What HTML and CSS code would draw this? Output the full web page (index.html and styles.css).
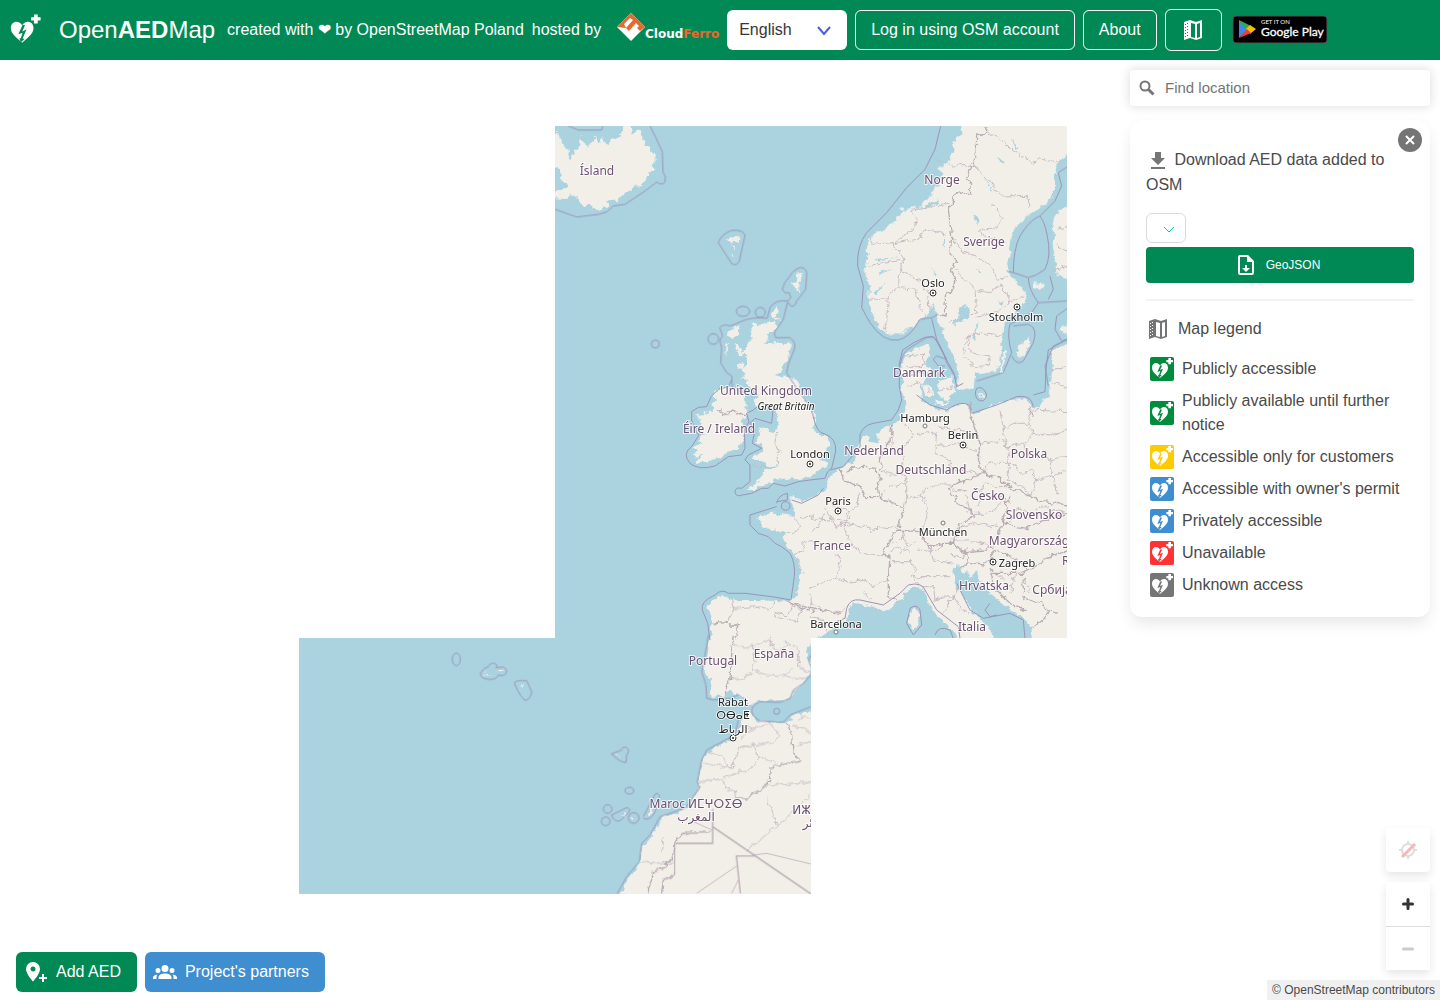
FILE: index.html
```html
<!DOCTYPE html>
<html lang="en">
<head>
<meta charset="utf-8">
<meta name="viewport" content="width=device-width, initial-scale=1">
<title>OpenAEDMap</title>
<link rel="stylesheet" href="styles.css">
</head>
<body>
<svg class="sprite" aria-hidden="true">
  <symbol id="aed" viewBox="0 0 72 72">
    <path fill="#fff" d="M30 26C24 14 6 16 6 32c0 13 13 21 24 31 11-10 24-18 24-31 0-16-18-18-24-6z"/>
    <path fill="currentColor" d="M31 25 22 45l9-3-4 12-3-1 3 9 8-7-4-1 8-19-9 4 6-13z"/>
    <path fill="#fff" d="M55 3h8v6h6v7h-6v6h-8v-6h-6V9h6z"/>
  </symbol>
  <symbol id="map-icon" viewBox="0 0 24 24">
    <path fill="currentColor" fill-rule="evenodd" d="M3 4 9 2l6 2 6-2v18l-6 2-6-2-6 2zM10 5v14l4 1V6zM16 6v14l3-1V5zM4 6v1h1V6zm2-1v1h1V5zM4 9v1h1V9zm2-1v1h1V8zM4 12v1h1v-1zm2-1v1h1v-1zm-2 4v1h1v-1zm2-1v1h1v-1zm-2 4v1h1v-1zm2-1v1h1v-1z"/>
  </symbol>
</svg>

<header class="navbar">
  <svg class="brand-icon"><use href="#aed"/></svg>
  <a class="brand" href="#">Open<b>AED</b>Map</a>
  <span class="credit">created with ❤ by <a href="#">OpenStreetMap Poland</a></span>
  <span class="hosted">hosted by</span>
  <a class="cloudferro" href="#" aria-label="CloudFerro">
    <svg width="104" height="32" viewBox="0 0 104 32">
      <path fill="#fff" d="M2 13 16 27 30 13 16-1z"/>
      <path fill="#e8692c" d="M2 13 16-1l14 14-5 4-3-3 2-2-3-3-7 8-3-3 7-8-3-2-6 6 2 4z"/>
      <text x="30" y="24" class="cf-text" fill="#fff">Cloud<tspan fill="#e8692c">Ferro</tspan></text>
    </svg>
  </a>
  <span class="language">
    <select aria-label="Language"><option>English</option></select>
    <svg width="16" height="10" viewBox="0 0 16 10"><path d="m2 1 6 7 6-7" fill="none" stroke="#485fe0" stroke-width="2"/></svg>
  </span>
  <button class="nav-btn">Log in using OSM account</button>
  <button class="nav-btn">About</button>
  <button class="nav-btn nav-icon" aria-label="Map"><svg width="24" height="24"><use href="#map-icon"/></svg></button>
  <a class="play" href="#" aria-label="Get it on Google Play">
    <svg width="96" height="30" viewBox="0 0 96 30">
      <rect x="1" y="1" width="94" height="27" rx="3" fill="#000" stroke="#555" stroke-width="1"/>
      <path fill="#4285f4" d="M7 6v17l9-9z"/><path fill="#34a853" d="m7 5 12 6-4 4-8-8z"/>
      <path fill="#fbbc04" d="m18 10 6 4-6 5-4-5z"/><path fill="#ea4335" d="m7 23 8-9 4 4z"/>
      <text x="29" y="9" class="play-small">GET IT ON</text>
      <text x="29" y="21" class="play-big">Google Play</text>
    </svg>
  </a>
</header>

<main class="map">
<svg class="tiles" viewBox="299 126 768 768" role="img" aria-label="Map of western Europe">
  <defs>
    <clipPath id="loaded"><path d="M555 126h512v512H811v256H299V638h256z"/></clipPath>
    <filter id="rough" x="289" y="116" width="788" height="788" filterUnits="userSpaceOnUse" color-interpolation-filters="sRGB">
      <feTurbulence type="fractalNoise" baseFrequency=".16" numOctaves="3" seed="4" result="n"/>
      <feDisplacementMap in="SourceGraphic" in2="n" scale="7" xChannelSelector="R" yChannelSelector="G"/>
    </filter>
  </defs>
  <g clip-path="url(#loaded)">
    <path class="sea" d="M299 126h768v768H299z"/>
    <!-- land -->
    <g class="land" filter="url(#rough)">
      <g transform="translate(555 126) scale(.3333)">
        <path d="M-30 12 12 20 22 55 40 68 42 92 50 100 58 72 72 68 78 32 88 45 96 70 110 50 118 32 130 48 140 50 146 30 155 60 168 42 190 38 205 12 218-29H225L232 25 245 12 262 18V40L275 45 270 60 290 72 302 85V105L290 120 298 130 280 145 262 180 235 182 205 205 185 225 160 222 158 238 140 250 112 245 85 235 70 222 50 205 40 218-30 216V205L25 190 40 180 22 165 20 148 5 125-30 115z"/>
        <path d="M515 338 550 330 548 345 530 352zM532 358l8 4-3 12zM533 382l6 14-5-2zM722 445l18-8-6 30-2 35-12-22-10-5 14-12zM650 560l20-14 4 16-14 10 16 10-16 2z"/>
        <path d="M530 605 557 598 550 625 530 640 520 625zM540 650 560 665 563 692 548 680zM514 655 522 650 515 695zM550 715l16-5-4 18-14 4z"/>
      </g>
      <g transform="translate(555 380) scale(.3333)">
        <path d="M500 20 540 28 552 40 570 50 572 75 582 95 568 112 560 125 570 150 560 190 548 210 520 215 490 235 460 245 430 250 425 240 445 228 415 225 430 212 412 205 440 190 430 180 450 160 430 155 440 130 425 105 450 95 475 95 470 75 490 65 480 45z"/>
        <path d="M593-167 660-172 668-162 640-132 630-112 650-110 705-112 708-97 690-52 678-27 660-14 690-7 725 0 735 30 752 60 772 95 780 115 778 150 790 165 820 170 826 200 808 225 795 240 820 245 810 262 780 285 760 295 715 298 690 300 660 295 650 310 620 315 605 330 575 330 590 315 610 300 635 270 660 262 675 255 640 260 620 240 590 240 600 225 625 210 618 190 598 190 615 160 610 145 640 150 660 155 668 135 660 120 665 100 670 90 655 75 620 78 605 85 595 60 615 45 590 30 575 0 555-5 575-20 550-10 575-20 560-30 575-50 570-75 560-82 575-98 585-122z"/>
      </g>
      <g transform="translate(810 380) scale(.3333)">
        <path d="M-160 410-135 400-105 398-75 405-50 408-47 390-60 353-50 345-35 358-10 362 30 335 50 330 55 290 90 265 120 250 135 240 140 210 160 165 175 165 180 185 205 190V155L245 135 275 120 270 105 290 90 285 60 275 30 280 0 272-40 290-82 330-95 355-108 358-75 345-45 365-35 340-20 345 0 330 20 335 50 340 65 370 80 385 95 420 90 440 75 470 70 480 100 490 105 540 80 600 60 650 55 665 80 690 85V60L715 55 720 10 725-40 730-90 805-125V810H665V740L640 715 600 690 560 655 520 625 505 590 500 570 480 590 470 570 465 590 455 565 440 555 430 570 435 620 465 650 480 680 515 725 545 755 565 805 470 800 430 760 410 735 375 700 355 660 340 625 310 620 285 640 265 665 235 690 180 680 130 665 115 685 118 705 80 740 20 775-10 800-5 835 3 860-10 895-40 930-70 960-160 963-185 975-195 960-220 940-240 930-255 947-300 947-298 895-320 875-308 825-298 765-295 720-310 680-285 655-250 648-235 660-165 660-65 665-45 650-30 600V560L-45 525-65 500-80 475-75 460-110 450-145 440z"/>
        <path d="M310 685 325 690V735L310 755 295 720zM335 12 365 20 370 45 345 45zM385 5 430-15 436 40 410 65 385 40zM505 35 525 45 515 55zM380 60l30 8-6 10-24-4z"/>
      </g>
      <g transform="translate(810 126) scale(.3333)">
        <path d="M445-29 455 20 430 50V80L415 110 380 130 400 145 375 190 345 225 325 245 300 240 275 265 250 290 215 315 180 335 170 370 175 400 165 440 178 480 175 510 185 560 200 595 230 625 270 625 310 600 340 575 365 545 370 530 385 590 400 620 410 650 430 690 445 735 440 790 490 792 495 745 550 735 570 720 575 650 580 600 595 570 640 540 650 510 625 470 600 450 595 420 605 330 620 300 660 265 710 230 735 190V140L745 100 805 60V-29z"/>
        <path d="M805 235 750 250 730 280 735 330 725 360 735 400 740 450 805 465zM805 590 750 600 760 625 805 620zM655 635 630 655 620 690 645 690 660 650zM585 670 570 735 578 735 590 680zM670 470l20 0 14 12-14 10-16-6zM270 245l10-4 4 12-8 4z"/>
      </g>
      <g transform="translate(420 635) scale(.3333)">
        <path d="M1200 222 1130 240 1100 262 1010 255 985 225 965 260 950 300 910 325 865 350 845 385 835 440 840 460 800 520 725 550 700 600 665 640 662 680 625 730 590 800H1200z"/>
        <path d="M192 115l20 5-4 3zM238 108h12v5zM300 148l14 4-8 3zM585 357l16 3-10 4zM600 540l18-10-6 18zM635 545l10 5-6 10zM700 510l4 14-12 18-10 4z"/>
      </g>
    </g>
    <!-- lakes -->
    <g class="lake" filter="url(#rough)"><g transform="translate(810 126) scale(.3333)">
      <path d="M450 540 482 543 475 578 428 600 442 570zM506 588 495 642 485 640 500 595zM485 258l18 14-4 26-6-20zM560 95l22 14-4 8zM605 35l20 30-6 4zM500 428l16 10-10 2zM556 530l26-8-10 14zM345 240l40-20-6 14-30 12zM360 420l20 24-4 4zM520 150l30 44-6-2zM400 350l6-20-2 34zM190 500l40-30-30 36zM195 400l70-8-60 12zM205 440l40-14-36 20z"/>
    </g></g>
    <!-- regional borders -->
    <g class="admin" filter="url(#rough)">
      <g transform="translate(810 126) scale(.3333)">
        <path d="M532 15 570 40 600 65 670 112 690 95 750 110M375 95 420 120 490 118 530 155 575 210 655 208 660 240M545 230 580 280 550 310 508 312 520 330 590 345M415 235 300 250 320 285 315 310 250 350 190 355 175 330M250 350 270 380 285 400 270 430 265 480 235 510 230 590 225 620M345 308 410 325M345 308 325 340 255 350M285 400 178 420M270 430 330 465 355 500 360 550M265 485 320 490 330 545 345 570M178 520 235 515M425 335 460 380 500 390 550 430 560 460 595 455M435 430 495 490 500 560 420 590M495 490 530 500 570 480 590 500 600 530 560 560 500 570M540 560 560 590M455 685 475 625 530 625 575 630M475 625 480 680 540 690 535 720 500 725 460 690M575 480 600 530 640 510M775 300 740 310M735 355 775 380M735 430 775 420M285 690 340 685 345 720 290 725M300 750 340 735 360 760M720 730 775 725"/>
      </g>
      <g transform="translate(810 380) scale(.3333)">
        <path d="M245 135 250 190 210 230 215 270 240 285 280 280 290 310 235 320 210 355M275 120 310 165 380 155 375 220 420 240 425 270 510 280M310 165 275 210 280 280M380 140 410 145 440 150 480 155M380 200 440 190 500 215M290 310 290 355 330 345 355 380 345 430 330 455M290 355 270 420M330 345 365 315 425 315M145 335 145 375 110 400 105 430 170 440 190 455 205 440 260 445M65 365 70 385 115 390 120 415 90 425 60 410 50 380M0 415 60 420M105 430 115 480 150 520 215 525M40 400 30 430 5 460M60 410 80 440 105 430M80 520 90 560 80 590 120 610 165 600 190 620 235 600M80 590 30 610 0 625M165 640 185 660M245 545 300 545 320 570 300 590 420 590M320 510 380 515 400 490M360 500 370 540 430 550M300 590 330 620M340 620 370 620 375 660 430 645 450 690 480 700M410 680 440 640 450 620M430 645 400 700M510 190 580 180 590 200 580 150 570 90M580 150 610 130 655 130 670 160 640 190 590 200 600 250 540 250 515 280M655 130 660 90 775 95M670 160 720 165 775 150M640 190 650 220 720 240 775 225M600 250 640 280 670 270 680 300 720 290 775 270M600 250 590 300 640 320 660 350M680 300 660 350M720 240 730 290 740 340M505 340 525 310 555 320 600 320M470 345 480 400 540 400 580 360M450 440 500 430 570 440M420 480 480 480 550 500M430 330 470 335M500 380 520 345 580 350M470 500 460 540 420 520M600 430 620 380 660 400 700 380 770 400M620 560 600 640M560 580 600 620M640 590 660 640M290 20 330 5 365 40M390 30 430 20M725 10 775 20M0 665 40 690 90 695 105 680M0 710 40 720 60 775M235 480 260 490 280 470 300 500 320 480M240 510 270 500 300 520M280 455 290 500 270 520"/>
      </g>
      <g transform="translate(555 380) scale(.3333)">
        <path d="M665 155 660 190 675 215 665 245 675 255M585 258 665 262M720 410 735 440 715 460 690 460M735 415 780 410M720 525 745 510 740 490 780 480M730 540 745 580M530 660 535 690 515 730M530 685 600 680 640 690 660 665M660 695 700 705 710 680 740 690 720 730 665 710 660 695M765 640 770 665 760 690"/>
      </g>
      <g transform="translate(420 635) scale(.3333)">
        <path d="M940 30 975 40 1000 30 1005 80 990 120 960 135 930 130M1000 35 1050 10 1055 40 1090 45 1100 20M1060 35 1050 0M1100 20 1135 50 1140 100 1170 110M1005 105 1040 122 1090 120 1110 130 1160 130M1090 120 1120 100M955 270 1000 280 1050 265 1080 300 1060 320 1000 330 960 340M1000 280 960 310M865 350 900 360 935 400 850 385M935 400 960 340 1000 330 1020 370 1070 380M910 430 990 400 1020 370M838 440 905 432 920 460 945 465 950 490M1050 450 1173 440M1040 490 1060 540 1070 575 1035 600 1010 625 980 645M1070 575 1173 480M1120 270 1173 290M1130 330 1173 320M1135 260 1150 240 1173 250M665 680 700 685 762 682M725 650 730 610"/>
      </g>
    </g>
    <g class="admin"><g transform="translate(420 635) scale(.3333)"><path d="M1000 660 1040 655 1173 687M830 775 950 693M935 775 955 735M820 560 876 585"/></g></g>
    <!-- country borders -->
    <g class="country" filter="url(#rough)">
      <g transform="translate(810 126) scale(.3333)"><path d="M525 0 530 15 500 35 498 90 470 155 485 175 480 205 440 200 415 250 425 330 420 380 440 405 425 430 435 460 430 490 410 510 405 570 385 565"/></g>
      <g transform="translate(810 380) scale(.3333)"><path d="M480 70 490 130 510 190 505 235 515 280 430 315 420 330 440 365 480 395 500 405 450 430 440 460 430 490 400 490 360 500 345 480 330 455 260 450 215 525 240 530 235 600 235 640 260 660M90 265 100 300 150 320 165 350 200 350 280 385 265 440M110 275 130 260 200 265 210 300 200 330 215 355M245 135 240 180 215 215 210 260M515 280 560 290 600 320 640 340 660 350 700 365 775 375M580 350 590 370 580 430 620 440 650 445 690 425 770 400M590 375 600 350M580 430 560 470 550 500 520 510 470 515 450 510 430 490M470 515 475 545 450 565M475 550 520 555 540 530 560 510 620 540 660 570 640 580 540 580 550 620 600 670 650 690 630 690M540 580 545 560M660 570 710 535 775 510M640 640 640 590M640 655 690 670 720 690 700 720 670 740M720 690 740 700M660 80 670 110M-65 665 0 685 90 700"/></g>
      <g transform="translate(555 380) scale(.3333)"><path d="M500 83 490 90 515 105 530 90 555 105 578 100M700 665 740 685 780 695M470 730 510 725 520 735 550 735 540 775"/></g>
      <g transform="translate(420 635) scale(.3333)"><path d="M940 0 935 60 930 130 920 160 918 182M1100 262 1115 300 1118 340 1138 380 1075 390 1050 400 1048 445 985 490 950 488M762 720 730 735 725 775M683 775 700 710 735 695 762 655 765 625 790 592 875 590"/></g>
    </g>
    <g class="country"><g transform="translate(420 635) scale(.3333)"><path d="M765 625H878V522M763 625V720M878 575 1173 777M961 775 949 663H1008"/></g></g>
    <!-- maritime limits -->
    <g class="marine">
      <g transform="translate(555 126) scale(.3333)">
        <path d="M40 0 70 12H140L143 0M285 0 305 40 322 78 324 138Q335 150 330 168 320 180 305 168L270 195 210 235 175 240 155 258 130 265 65 273 0 250M490 350Q498 325 530 313 565 310 570 328L553 405Q545 422 530 413zM755 450Q758 428 738 424 715 430 705 450 685 470 682 490 690 505 702 500L708 515 698 525Q660 520 645 545L637 577Q590 570 550 590L525 600Q505 592 494 605L503 630Q490 640 500 665L497 710 515 740 530 750 532 785M755 450 752 490 725 525Q718 548 705 538L698 528 685 580 658 620 662 635H705Q725 650 718 670L700 715 695 740 730 795 765 840 778 880"/>
        <ellipse cx="564" cy="556" rx="20" ry="15"/><circle cx="616" cy="559" r="15"/><circle cx="475" cy="639" r="16"/><circle cx="301" cy="654" r="12"/>
      </g>
      <g transform="translate(555 380) scale(.3333)">
        <path d="M530 0 520 20 490 28 468 50 455 80 430 82 410 95V120L420 150 432 165 410 200Q380 220 405 250 430 272 480 258L520 230 560 225 570 205 568 150 582 125 575 100 595 90 620 70 655 80 650 130 600 115 585 130 600 150 592 190 620 205 580 225 570 240 585 255V305L560 325Q540 320 540 338 545 352 562 345L590 340 620 325 640 325 655 310 690 318 730 305 765 300 810 295 818 275 830 265 842 215Q845 175 810 162 785 160 775 110M665 380 585 405V435L610 460 640 470 660 490 680 500 705 520Q722 550 718 590L708 660 650 650 570 640 520 640Q500 625 480 645 435 665 442 690L458 730 465 780M665 370Q670 345 697 340V360L665 365M710 360 740 370 790 345 805 325"/><circle cx="692" cy="378" r="13"/>
      </g>
      <g transform="translate(810 380) scale(.3333)">
        <path d="M60 270 100 260 150 200 150 165Q160 135 190 130L245 120 265 90 275 60 268 20V-50L278-90Q310-115 345-128L370-130 385-110 410-60 432-20 440 20 460 10M320 45 360 75 410 90Q470 50 485 90M485 100 560 75 620 50Q655 45 665 65L670 80M670 45 705 35 708-30 715-90 775-125M500 25Q520 15 530 45 525 70 505 60 490 45 500 25M80 725 105 715 110 685Q120 655 150 660L220 675 270 640 295 615Q335 605 345 630L380 690 445 740 450 775M440 610 455 640 480 690 520 715 600 700 640 720 645 775M540 670 525 690 540 710 560 705M300 685Q320 670 330 690L335 735 310 765 290 730zM375 765Q385 735 420 750L430 775"/>
      </g>
      <g transform="translate(810 126) scale(.3333)">
        <path d="M392 0 375 70 345 130 290 185 230 260 170 320Q140 360 143 420L160 480 155 545 180 590Q220 650 265 642 300 635 330 580L365 575 385 565M365 578 380 640 400 680 410 710 440 760M270 720Q275 680 300 665L350 635Q375 625 385 655L410 700 380 690 370 700 385 720 405 720M590 435 610 440Q610 370 630 330 660 280 690 270 705 290 712 330 725 390 705 430 680 450 655 455L610 440M655 455Q655 490 685 530L775 525M690 270 735 225 755 180 745 140 775 120M685 530 665 560 600 595Q590 630 605 680L580 740 500 765M610 600 655 595Q685 605 670 650L640 705Q620 720 605 690M715 520 730 490 720 450M775 545 740 570 735 610 755 645 775 640M775 640 730 660 705 720 715 780"/>
      </g>
      <g transform="translate(420 635) scale(.3333)">
        <path d="M865 0 855 60 845 110 858 150 860 190 880 195 930 190 955 180M1173 120 1150 145 1120 165 1110 190 1080 202 1020 200Q970 225 1020 258L1090 262 1110 240 1173 215M955 255 945 300 860 345 845 375 832 440 838 460 795 520 720 545 690 600 665 625 658 680 620 725 592 775M1173 60 1165 75 1173 95"/>
        <ellipse cx="109" cy="73" rx="12" ry="19"/><path d="M205 95Q210 82 225 85 235 92 228 98L250 96Q265 105 258 115 250 125 235 120 230 135 205 133 180 130 181 115 190 98 205 95M283 145Q282 135 320 137L335 170Q333 190 318 196 305 195 283 145M574 357 605 345Q605 335 618 337 632 345 620 360L618 382Q605 385 574 357"/>
        <ellipse cx="628" cy="467" rx="13" ry="10"/><circle cx="563" cy="522" r="13"/><circle cx="557" cy="559" r="13"/><circle cx="641" cy="549" r="16"/><path d="M575 540 620 518Q632 520 628 530L600 558Q580 560 575 540M670 545 705 478Q715 470 719 485L705 530Q690 560 670 550"/><circle cx="1070" cy="229" r="9"/>
      </g>
    </g>
  </g>
  <g class="places">
    <g class="dots"><circle cx="933" cy="293" r="3"/><circle cx="1017" cy="307" r="3"/><circle cx="810" cy="464" r="3"/><circle cx="963" cy="445" r="3"/><circle cx="838" cy="511" r="3"/><circle cx="993" cy="562" r="3"/><circle cx="733" cy="738" r="3"/></g>
    <g class="cores"><circle cx="933" cy="293" r="1"/><circle cx="1017" cy="307" r="1"/><circle cx="810" cy="464" r="1"/><circle cx="963" cy="445" r="1"/><circle cx="838" cy="511" r="1"/><circle cx="993" cy="562" r="1"/><circle cx="733" cy="738" r="1"/></g>
    <g class="towns"><circle cx="925" cy="426" r="2"/><circle cx="943" cy="523" r="2"/><circle cx="836" cy="632" r="2"/></g>
    <g class="name" clip-path="url(#loaded)">
      <text x="597" y="175">Ísland</text><text x="942" y="184">Norge</text><text x="984" y="246">Sverige</text><text x="919" y="377">Danmark</text><text x="766" y="395">United Kingdom</text><text x="719" y="433">Éire / Ireland</text><text x="874" y="455">Nederland</text><text x="931" y="474">Deutschland</text><text x="1029" y="458">Polska</text><text x="988" y="500">Česko</text><text x="1034" y="519">Slovensko</text><text x="1029" y="545">Magyarország</text><text x="832" y="550">France</text><text x="984" y="590">Hrvatska</text><text x="1052" y="594">Србија</text><text x="972" y="631">Italia</text><text x="713" y="665">Portugal</text><text x="774" y="658">España</text><text x="696" y="808">Maroc ⵍⵎⵖⵔⵉⴱ</text><text x="696" y="821">المغرب</text><text x="818" y="814">ⵍⵣⵣⴰⵢⴻ</text><text x="820" y="827">الجزائر</text><text x="1087" y="565">România</text>
    </g>
    <g class="name city">
      <text x="933" y="287">Oslo</text><text x="1016" y="321">Stockholm</text><text x="925" y="422">Hamburg</text><text x="963" y="439">Berlin</text><text x="810" y="458">London</text><text x="838" y="505">Paris</text><text x="943" y="536">München</text><text x="1017" y="567">Zagreb</text><text x="836" y="628">Barcelona</text><text x="733" y="706">Rabat</text><text x="733" y="719">ⵔⴱⴰⵟ</text><text x="733" y="733">الرباط</text>
      <text class="island" x="786" y="410">Great Britain</text>
    </g>
  </g>
</svg>

<aside class="side">
  <label class="search">
    <svg width="18" height="18" viewBox="0 0 18 18"><circle cx="7" cy="7" r="4.5" fill="none" stroke="#757575" stroke-width="2"/><path d="m10.500 10.500 5 5" stroke="#757575" stroke-width="3"/></svg>
    <input type="text" placeholder="Find location" aria-label="Find location">
  </label>
  <section class="panel">
    <button class="close" aria-label="Close"><svg width="24" height="24" viewBox="0 0 24 24"><circle cx="12" cy="12" r="12" fill="#757575"/><path d="m8 8 8 8m0-8-8 8" stroke="#fff" stroke-width="2"/></svg></button>
    <p class="download"><svg width="24" height="24" viewBox="0 0 24 24"><path fill="#757575" d="M19 9h-4V3H9v6H5l7 7zM5 18v2h14v-2z"/></svg> Download AED data added to OSM</p>
    <span class="region">
      <select aria-label="Region"></select>
      <svg width="12" height="8" viewBox="0 0 12 8"><path d="m1 1 5 5 5-5" fill="none" stroke="#00d1b2"/></svg>
    </span>
    <button class="geojson"><svg width="24" height="24" viewBox="0 0 24 24"><path fill="currentColor" d="M14 2H6a2 2 0 0 0-2 2v16c0 1.100.9 2 2 2h12a2 2 0 0 0 2-2V8zm4 18H6V4h7v5h5zm-5-8v3h3l-4 4-4-4h3v-3z"/></svg>GeoJSON</button>
    <hr>
    <h2 class="legend-title"><svg width="24" height="24"><use href="#map-icon"/></svg>Map legend</h2>
    <ul class="legend">
      <li><svg class="green"><use href="#aed"/></svg>Publicly accessible</li>
      <li><svg class="green"><use href="#aed"/></svg>Publicly available until further notice</li>
      <li><svg class="yellow"><use href="#aed"/></svg>Accessible only for customers</li>
      <li><svg class="blue"><use href="#aed"/></svg>Accessible with owner's permit</li>
      <li><svg class="blue"><use href="#aed"/></svg>Privately accessible</li>
      <li><svg class="red"><use href="#aed"/></svg>Unavailable</li>
      <li><svg class="gray"><use href="#aed"/></svg>Unknown access</li>
    </ul>
  </section>
</aside>

<div class="actions">
  <button class="add"><svg width="24" height="24" viewBox="0 0 24 24"><path fill="currentColor" fill-rule="evenodd" d="M9 2a7 7 0 0 0-7 7c0 5 7 12.500 7 12.500S16 14 16 9a7 7 0 0 0-7-7zm0 4.500a2.500 2.500 0 1 1 0 5 2.500 2.500 0 0 1 0-5zM18 14h2v3h3v2h-3v3h-2v-3h-3v-2h3z"/></svg>Add AED</button>
  <button class="partners"><svg width="24" height="24" viewBox="0 0 24 24"><path fill="currentColor" d="M12 5a3.500 3.500 0 1 0 0 7 3.500 3.500 0 0 0 0-7M5 8a2.500 2.500 0 1 0 0 5 2.500 2.500 0 0 0 0-5m14 0a2.500 2.500 0 1 0 0 5 2.500 2.500 0 0 0 0-5M5.500 19v-1.700c0-2.400 3.200-3.800 6.500-3.800s6.500 1.400 6.500 3.800V19zM0 19v-1.500c0-1.400 1.900-2.600 4.500-2.900-.6.700-1 1.600-1 2.700V19zm24 0h-3.500v-1.700c0-1-.4-2-1-2.700 2.600.3 4.500 1.500 4.500 2.900z"/></svg>Project's partners</button>
</div>

<div class="controls">
  <button class="locate" aria-label="Location not available"><svg width="20" height="20" viewBox="0 0 20 20"><circle cx="10" cy="10" r="6" fill="none" stroke="#ddd" stroke-width="2"/><path d="M10 1v4m0 10v4M1 10h4m10 0h4" stroke="#ddd" stroke-width="2"/><path d="M4 17 17 4" stroke="#f5b5bd" stroke-width="3"/></svg></button>
  <div class="zoom">
    <button aria-label="Zoom in"><svg width="14" height="14" viewBox="0 0 14 14"><path d="M7 2.500v9M2.500 7h9" stroke="#333" stroke-width="3" stroke-linecap="round"/></svg></button>
    <button aria-label="Zoom out"><svg width="14" height="14" viewBox="0 0 14 14"><path d="M2.500 7h9" stroke="#ccc" stroke-width="3" stroke-linecap="round"/></svg></button>
  </div>
</div>
<div class="attribution">© <a href="#">OpenStreetMap</a> contributors</div>
</main>
</body>
</html>
```
FILE: styles.css
```css
* { box-sizing: border-box; }
body {
  margin: 0;
  min-height: 100vh;
  display: flex;
  flex-direction: column;
  font: 16px/24px "Liberation Sans", Arial, sans-serif;
  color: #4a4a4a;
}
a { color: inherit; text-decoration: none; }
button, input, select { font: inherit; margin: 0; }
button { cursor: pointer; border: 0; }
svg { display: block; flex: none; }
.sprite { position: absolute; width: 0; height: 0; }

.navbar {
  height: 60px;
  display: flex;
  align-items: center;
  gap: 8px;
  padding-left: 8px;
  background: #008954;
  color: #fff;
  white-space: nowrap;
}
.brand-icon { width: 34px; height: 34px; color: #008954; }
.brand { font-size: 24px; margin: 0 4px 0 9px; }
.cloudferro { margin-left: 6px; }
.cloudferro svg { overflow: visible; }
.cf-text { font: bold 12px "DejaVu Sans", sans-serif; }
.language { position: relative; }
.language select {
  display: block;
  appearance: none;
  width: 120px;
  height: 40px;
  padding: 0 12px;
  border: 0;
  border-radius: 6px;
  background: #fff;
  color: #363636;
}
.language svg { position: absolute; right: 15px; top: 16px; pointer-events: none; }
.nav-btn {
  height: 40px;
  padding: 0 15px;
  border: 1px solid #fff;
  border-radius: 6px;
  background: transparent;
  color: #fff;
}
.nav-icon { height: 42px; width: 57px; }
.play { margin-left: 2px; }
.play-small { font: 6px Lato, sans-serif; fill: #fff; }
.play-big { font: 12px Lato, sans-serif; fill: #fff; stroke: #fff; stroke-width: .3px; }

.map { position: relative; flex: 1; overflow: hidden; background: #fff; }
.tiles {
  position: absolute;
  left: calc(50% - 421px);
  top: calc(50% - 404px);
  width: 768px;
  height: 768px;
}
.sea { fill: #aad3df; }
.land { fill: #f2efe9; }
.lake { fill: #aad3df; }
.admin, .country, .marine { fill: none; stroke-linejoin: round; }
.admin { stroke: #c9bcc4; stroke-width: 3; }
.country { stroke: #b8abb2; stroke-width: 4; }
.marine { stroke: #9a95b8; stroke-width: 3; }
.dots { fill: #fff; stroke: #333; }
.cores { fill: #222; }
.towns { fill: #fff; stroke: #777; }
.name {
  font: 12px "Noto Sans", "DejaVu Sans", sans-serif;
  text-anchor: middle;
  fill: #6b5070;
  stroke: #fff;
  stroke-opacity: .75;
  stroke-width: 2px;
  paint-order: stroke;
}
.city { font-size: 11px; fill: #222; }
.island { font-size: 10px; font-style: italic; }

.side {
  position: absolute;
  top: 10px;
  right: 10px;
  width: 300px;
}
.search {
  display: flex;
  align-items: center;
  height: 36px;
  padding: 0 8px;
  gap: 9px;
  background: #fff;
  border-radius: 4px;
  box-shadow: 0 0 10px 2px rgba(0, 0, 0, .1);
}
.search input { flex: 1; min-width: 0; border: 0; padding: 0; outline: 0; font-size: 15px; background: none; }
.search input::placeholder { color: #757575; }
.panel {
  position: relative;
  margin-top: 14px;
  padding: 27px 16px 20px;
  background: #fff;
  border-radius: 12px;
  box-shadow: 0 8px 16px -2px rgba(10, 10, 10, .1), 0 0 1px rgba(10, 10, 10, .05);
}
.close { position: absolute; top: 8px; right: 8px; padding: 0; background: none; }
.download { margin: 0 0 16px; line-height: 25px; }
.download svg { display: inline-block; vertical-align: middle; margin: -4px 0; }
.region { position: relative; display: block; width: 40px; margin-bottom: 4px; }
.region select {
  display: block;
  appearance: none;
  width: 40px;
  height: 30px;
  border: 1px solid #dbdbdb;
  border-radius: 6px;
  background: #fff;
}
.region svg { position: absolute; right: 11px; top: 13px; pointer-events: none; }
.geojson {
  width: 100%;
  height: 36px;
  display: flex;
  align-items: center;
  justify-content: center;
  gap: 8px;
  padding: 0 12px 0 6px;
  border-radius: 4px;
  background: #008954;
  color: #fff;
  font-size: 12px;
}
hr { height: 2px; margin: 16px 0; border: 0; background: #f2f2f2; }
.legend-title { display: flex; align-items: center; gap: 8px; margin: 0 0 16px; font-size: 16px; font-weight: normal; }
.legend-title svg { color: #757575; }
.legend { display: grid; gap: 8px; margin: 0; padding: 0 0 0 4px; list-style: none; }
.legend li { display: flex; align-items: center; gap: 8px; }
.legend svg { width: 24px; height: 24px; border-radius: 2px; background: currentColor; }
.green { color: #008c3c; }
.yellow { color: #fecb00; }
.blue { color: #3e8ed0; }
.red { color: #ff3333; }
.gray { color: #757575; }

.actions { position: absolute; left: 16px; bottom: 8px; display: flex; gap: 8px; }
.actions button {
  display: flex;
  align-items: center;
  gap: 8px;
  height: 40px;
  padding: 0 16px 0 8px;
  border-radius: 6px;
  color: #fff;
}
.actions .add { background: #008954; }
.actions .partners { background: #3e8ed0; }
.controls { position: absolute; right: 10px; bottom: 30px; display: grid; gap: 10px; }
.controls button { width: 44px; height: 44px; display: grid; place-items: center; padding: 0; background: #fff; }
.locate, .zoom { border-radius: 4px; box-shadow: 0 4px 10px rgba(0, 0, 0, .1); }
.zoom button + button { border-top: 1px solid #ddd; }
.attribution {
  position: absolute;
  right: 0;
  bottom: 0;
  padding: 0 5px;
  background: #f0f0f0;
  font-size: 12px;
  line-height: 20px;
}
```
